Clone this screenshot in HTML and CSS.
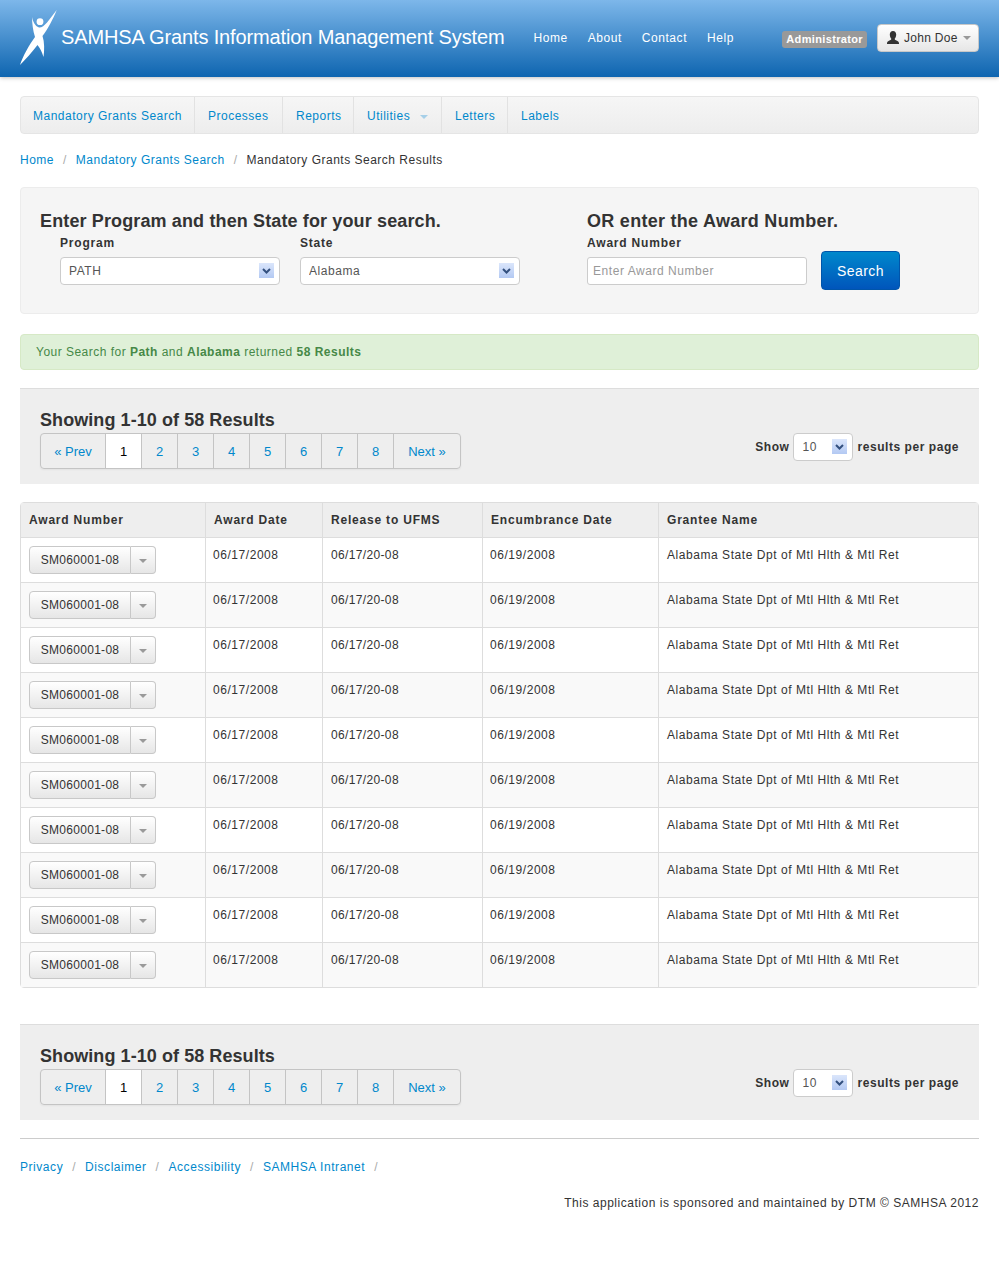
FILE: index.html
```html
<!DOCTYPE html>
<html lang="en">
<head>
  <meta charset="UTF-8">
  <title>SAMHSA Grants Information Management System</title>
  <link rel="stylesheet" href="styles.css">
</head>
<body>
  <header class="topbar">
    <a class="brand" href="#">
      <svg class="logo" width="37" height="56" viewBox="0 0 37 56">
        <circle cx="20" cy="11.7" r="3.4" fill="#fff"/>
        <path fill="#fff" d="M12 7C13 12 15 16 19 17.500C24 18 29 10 36.700 0C33 9 28 19 22.500 26C24.500 32 24.500 40 23.500 47C22 42 20 38 17.500 35C12 42 6 49 0 55C3 46 9 35 15 27C13 21 12 13 12 7Z"/>
      </svg>
      <span class="brand-name">SAMHSA Grants Information Management System</span>
    </a>
    <nav class="top-links">
      <a href="#">Home</a>
      <a href="#">About</a>
      <a href="#">Contact</a>
      <a href="#">Help</a>
    </nav>
    <div class="user-area">
      <span class="role-label">Administrator</span>
      <button class="user-btn" type="button">
        <svg width="12" height="14" viewBox="0 0 12 14"><path fill="#333" d="M6 0C8 0 9.200 1.500 9.200 3.600C9.200 5.500 8.500 7 7.700 7.800C7.700 8.800 8.500 9.200 10 9.800C11.200 10.300 12 10.800 12 12.500L12 13L0 13L0 12.500C0 10.800 .8 10.300 2 9.800C3.500 9.200 4.300 8.800 4.300 7.800C3.500 7 2.800 5.500 2.800 3.600C2.800 1.500 4 0 6 0Z"/></svg>
        John Doe <span class="caret"></span>
      </button>
    </div>
  </header>

  <div class="container">
    <ul class="main-nav">
      <li><a href="#">Mandatory Grants Search</a></li>
      <li><a href="#">Processes</a></li>
      <li><a href="#">Reports</a></li>
      <li><a href="#">Utilities <span class="caret caret-blue"></span></a></li>
      <li><a href="#">Letters</a></li>
      <li><a href="#">Labels</a></li>
    </ul>

    <ul class="breadcrumb">
      <li><a href="#">Home</a><span class="divider">/</span></li>
      <li><a href="#">Mandatory Grants Search</a><span class="divider">/</span></li>
      <li>Mandatory Grants Search Results</li>
    </ul>

    <form class="search-well">
      <div class="search-left">
        <h3>Enter Program and then State for your search.</h3>
        <div class="field-row">
          <div class="field">
            <label for="program">Program</label>
            <div class="select-wrap">
              <select id="program"><option>PATH</option></select>
              <svg class="select-arrow" width="15" height="15" viewBox="0 0 15 15"><use href="#arrow"/></svg>
            </div>
          </div>
          <div class="field">
            <label for="state">State</label>
            <div class="select-wrap">
              <select id="state"><option>Alabama</option></select>
              <svg class="select-arrow" width="15" height="15" viewBox="0 0 15 15"><use href="#arrow"/></svg>
            </div>
          </div>
        </div>
      </div>
      <div class="search-right">
        <h3>OR enter the Award Number.</h3>
        <label for="award">Award Number</label>
        <div class="award-row">
          <input type="text" id="award" placeholder="Enter Award Number">
          <button class="btn-search" type="button">Search</button>
        </div>
      </div>
    </form>

    <div class="alert">Your Search for <b>Path</b> and <b>Alabama</b> returned <b>58 Results</b></div>

    <section class="results-bar">
      <div>
        <h3>Showing 1-10 of 58 Results</h3>
        <ul class="pagination">
          <li class="wide-prev"><a href="#">« Prev</a></li>
          <li class="active"><a href="#">1</a></li>
          <li><a href="#">2</a></li>
          <li><a href="#">3</a></li>
          <li><a href="#">4</a></li>
          <li><a href="#">5</a></li>
          <li><a href="#">6</a></li>
          <li><a href="#">7</a></li>
          <li><a href="#">8</a></li>
          <li class="wide-next"><a href="#">Next »</a></li>
        </ul>
      </div>
      <div class="per-page">
        <b>Show</b>
        <div class="select-wrap select-small">
          <select><option>10</option></select>
          <svg class="select-arrow" width="15" height="15" viewBox="0 0 15 15"><use href="#arrow"/></svg>
        </div>
        <b>results per page</b>
      </div>
    </section>

    <table class="results">
      <thead>
        <tr>
          <th class="col-award">Award Number</th>
          <th class="col-date">Award Date</th>
          <th class="col-release">Release to UFMS</th>
          <th class="col-enc">Encumbrance Date</th>
          <th>Grantee Name</th>
        </tr>
      </thead>
      <tbody>
        <tr><td><div class="split"><button type="button">SM060001-08</button><button class="split-caret" type="button"><span class="caret"></span></button></div></td><td>06/17/2008</td><td>06/17/20-08</td><td>06/19/2008</td><td>Alabama State Dpt of Mtl Hlth &amp; Mtl Ret</td></tr>
        <tr><td><div class="split"><button type="button">SM060001-08</button><button class="split-caret" type="button"><span class="caret"></span></button></div></td><td>06/17/2008</td><td>06/17/20-08</td><td>06/19/2008</td><td>Alabama State Dpt of Mtl Hlth &amp; Mtl Ret</td></tr>
        <tr><td><div class="split"><button type="button">SM060001-08</button><button class="split-caret" type="button"><span class="caret"></span></button></div></td><td>06/17/2008</td><td>06/17/20-08</td><td>06/19/2008</td><td>Alabama State Dpt of Mtl Hlth &amp; Mtl Ret</td></tr>
        <tr><td><div class="split"><button type="button">SM060001-08</button><button class="split-caret" type="button"><span class="caret"></span></button></div></td><td>06/17/2008</td><td>06/17/20-08</td><td>06/19/2008</td><td>Alabama State Dpt of Mtl Hlth &amp; Mtl Ret</td></tr>
        <tr><td><div class="split"><button type="button">SM060001-08</button><button class="split-caret" type="button"><span class="caret"></span></button></div></td><td>06/17/2008</td><td>06/17/20-08</td><td>06/19/2008</td><td>Alabama State Dpt of Mtl Hlth &amp; Mtl Ret</td></tr>
        <tr><td><div class="split"><button type="button">SM060001-08</button><button class="split-caret" type="button"><span class="caret"></span></button></div></td><td>06/17/2008</td><td>06/17/20-08</td><td>06/19/2008</td><td>Alabama State Dpt of Mtl Hlth &amp; Mtl Ret</td></tr>
        <tr><td><div class="split"><button type="button">SM060001-08</button><button class="split-caret" type="button"><span class="caret"></span></button></div></td><td>06/17/2008</td><td>06/17/20-08</td><td>06/19/2008</td><td>Alabama State Dpt of Mtl Hlth &amp; Mtl Ret</td></tr>
        <tr><td><div class="split"><button type="button">SM060001-08</button><button class="split-caret" type="button"><span class="caret"></span></button></div></td><td>06/17/2008</td><td>06/17/20-08</td><td>06/19/2008</td><td>Alabama State Dpt of Mtl Hlth &amp; Mtl Ret</td></tr>
        <tr><td><div class="split"><button type="button">SM060001-08</button><button class="split-caret" type="button"><span class="caret"></span></button></div></td><td>06/17/2008</td><td>06/17/20-08</td><td>06/19/2008</td><td>Alabama State Dpt of Mtl Hlth &amp; Mtl Ret</td></tr>
        <tr><td><div class="split"><button type="button">SM060001-08</button><button class="split-caret" type="button"><span class="caret"></span></button></div></td><td>06/17/2008</td><td>06/17/20-08</td><td>06/19/2008</td><td>Alabama State Dpt of Mtl Hlth &amp; Mtl Ret</td></tr>
      </tbody>
    </table>

    <section class="results-bar results-bar-bottom">
      <div>
        <h3>Showing 1-10 of 58 Results</h3>
        <ul class="pagination">
          <li class="wide-prev"><a href="#">« Prev</a></li>
          <li class="active"><a href="#">1</a></li>
          <li><a href="#">2</a></li>
          <li><a href="#">3</a></li>
          <li><a href="#">4</a></li>
          <li><a href="#">5</a></li>
          <li><a href="#">6</a></li>
          <li><a href="#">7</a></li>
          <li><a href="#">8</a></li>
          <li class="wide-next"><a href="#">Next »</a></li>
        </ul>
      </div>
      <div class="per-page">
        <b>Show</b>
        <div class="select-wrap select-small">
          <select><option>10</option></select>
          <svg class="select-arrow" width="15" height="15" viewBox="0 0 15 15"><use href="#arrow"/></svg>
        </div>
        <b>results per page</b>
      </div>
    </section>

    <footer class="page-footer">
      <ul class="footer-links">
        <li><a href="#">Privacy</a><span class="divider">/</span></li>
        <li><a href="#">Disclaimer</a><span class="divider">/</span></li>
        <li><a href="#">Accessibility</a><span class="divider">/</span></li>
        <li><a href="#">SAMHSA Intranet</a><span class="divider">/</span></li>
      </ul>
      <p class="sponsor">This application is sponsored and maintained by DTM © SAMHSA 2012</p>
    </footer>
  </div>

  <!-- shared select arrow -->
  <svg class="defs" width="0" height="0">
    <defs>
      <linearGradient id="arrowBg" x1="0" y1="0" x2="0" y2="1">
        <stop offset="0" stop-color="#dbe6fb"/>
        <stop offset="1" stop-color="#b3c9f3"/>
      </linearGradient>
      <g id="arrow">
        <rect width="15" height="15" fill="url(#arrowBg)"/>
        <path d="M4 6L7.500 9.500L11 6" fill="none" stroke="#33507f" stroke-width="2"/>
      </g>
    </defs>
  </svg>
</body>
</html>
```

FILE: styles.css
```css
body {
  margin: 0;
  font-family: "Liberation Sans", Arial, sans-serif;
  font-size: 12px;
  line-height: 20px;
  letter-spacing: 0.55px;
  color: #333;
  background-color: #fff;
}

a {
  color: #0088cc;
  text-decoration: none;
}

ul {
  list-style: none;
  margin: 0;
  padding: 0;
}

h3 {
  margin: 0;
  font-size: 18px;
  line-height: 20px;
  letter-spacing: 0.13px;
  color: #333;
}

.defs {
  position: absolute;
}

/* top bar */
.topbar {
  display: flex;
  align-items: center;
  height: 77px;
  padding: 0 20px;
  box-sizing: border-box;
  background: linear-gradient(to bottom, #7db7ea, #0e65b0);
  box-shadow: 0 1px 4px rgba(0, 0, 0, 0.25);
}

.brand {
  display: flex;
  align-items: flex-start;
  color: #fff;
}

.logo {
  margin-top: -1px;
}

.brand-name {
  margin: 13px 0 0 4px;
  font-size: 20px;
  line-height: 26px;
  letter-spacing: -0.13px;
  white-space: nowrap;
}

.top-links {
  display: flex;
  gap: 20px;
  margin: 0 0 2px 29px;
}

.top-links a {
  color: #fff;
}

.user-area {
  display: flex;
  align-items: center;
  gap: 10px;
  margin-left: auto;
  margin-top: -2px;
}

.role-label {
  padding: 0 4px;
  border-radius: 3px;
  background-color: #999;
  color: #fff;
  font-size: 11px;
  line-height: 17px;
  font-weight: bold;
  letter-spacing: 0.35px;
  margin-top: 4px;
}

.user-btn {
  display: flex;
  align-items: center;
  gap: 5px;
  width: 102px;
  height: 28px;
  padding: 0 0 0 9px;
  border: 1px solid #c8c8c8;
  border-radius: 4px;
  background: linear-gradient(to bottom, #fff, #e6e6e6);
  font: inherit;
  letter-spacing: 0.3px;
  color: #333;
}

.caret {
  display: inline-block;
  width: 0;
  height: 0;
  border-top: 4px solid #999;
  border-left: 4px solid transparent;
  border-right: 4px solid transparent;
  vertical-align: middle;
}

.caret-blue {
  border-top-color: #a6cfe8;
  margin-left: 6px;
}

.container {
  padding: 0 20px;
}

/* main nav */
.main-nav {
  display: flex;
  height: 36px;
  margin-top: 19px;
  border: 1px solid #e5e5e5;
  border-radius: 4px;
  background: linear-gradient(to bottom, #f6f6f6, #ededed);
  letter-spacing: 0.5px;
}

.main-nav li {
  box-sizing: border-box;
  border-right: 1px solid #e2e2e2;
}

.main-nav li:nth-child(1) { width: 174px; }
.main-nav li:nth-child(2) { width: 88px; }
.main-nav li:nth-child(3) { width: 71px; }
.main-nav li:nth-child(4) { width: 88px; }
.main-nav li:nth-child(5) { width: 66px; }

.main-nav li:last-child {
  border-right: 0;
}

.main-nav a {
  display: block;
  padding: 0 13px 0 12px;
  line-height: 38px;
  white-space: nowrap;
}

.main-nav li + li a {
  padding-left: 13px;
}

.breadcrumb {
  display: flex;
  margin-top: 16px;
  letter-spacing: 0.5px;
}

.divider {
  padding: 0 9px;
  color: #aaa;
}

/* search box */
.search-well {
  display: flex;
  height: 102px;
  margin-top: 17px;
  padding-top: 23px;
  border: 1px solid #ececec;
  border-radius: 4px;
  background-color: #f5f5f5;
}

.search-left {
  width: 566px;
  padding-left: 19px;
  box-sizing: border-box;
}

.search-left h3,
.search-right h3 {
  margin-bottom: 3px;
}

.search-right h3 {
  letter-spacing: 0.28px;
}

.field-row {
  display: flex;
  gap: 20px;
  padding-left: 20px;
}

label {
  display: block;
  font-weight: bold;
  line-height: 18px;
  margin-bottom: 5px;
  letter-spacing: 0.8px;
}

.select-wrap {
  position: relative;
  width: 220px;
  height: 28px;
}

select {
  display: block;
  width: 100%;
  height: 100%;
  padding: 0 8px;
  border: 1px solid #ccc;
  border-radius: 4px;
  background-color: #fff;
  appearance: none;
  font: inherit;
  letter-spacing: inherit;
  color: #555;
}

.select-arrow {
  position: absolute;
  top: 6px;
  right: 6px;
}

.search-right {
  flex: 1;
}

.award-row {
  display: flex;
  align-items: flex-end;
  gap: 14px;
  margin-top: -6px;
}

.award-row input {
  width: 220px;
  height: 28px;
  padding: 0 5px;
  box-sizing: border-box;
  border: 1px solid #ccc;
  border-radius: 3px;
  font: inherit;
  letter-spacing: inherit;
  margin-bottom: 5px;
}

.award-row input::placeholder {
  color: #999;
}

.btn-search {
  width: 79px;
  height: 39px;
  border: 1px solid #0055aa;
  border-radius: 4px;
  background: linear-gradient(to bottom, #0088cc, #0055bb);
  color: #fff;
  font: inherit;
  font-size: 14px;
  letter-spacing: 0.4px;
}

.alert {
  height: 34px;
  margin-top: 20px;
  padding-left: 15px;
  border: 1px solid #d6e9c6;
  border-radius: 4px;
  background-color: #dff0d8;
  color: #468847;
  line-height: 35px;
  letter-spacing: 0.48px;
}

/* results bar + pager */
.results-bar {
  display: flex;
  justify-content: space-between;
  height: 95px;
  margin-top: 18px;
  padding: 0 20px;
  border-top: 1px solid #ddd;
  background-color: #eee;
}

.results-bar h3 {
  margin-top: 21px;
  letter-spacing: 0.07px;
}

.pagination {
  display: flex;
  height: 34px;
  margin-top: 3px;
  border: 1px solid #c4c4c4;
  border-radius: 4px;
  box-shadow: 0 1px 2px rgba(0, 0, 0, 0.05);
}

.pagination li {
  width: 35px;
  border-right: 1px solid #c4c4c4;
  text-align: center;
}

.pagination li:last-child {
  border-right: 0;
}

.pagination a {
  display: block;
  line-height: 35px;
  font-size: 13px;
  letter-spacing: 0;
}

.pagination .wide-prev {
  width: 64px;
}

.pagination .wide-next {
  width: 66px;
}

.pagination .active {
  background-color: #fff;
}

.pagination .active a {
  color: #000;
}

.per-page {
  display: flex;
  align-items: center;
  gap: 4px;
  height: 28px;
  margin-top: 44px;
}

.per-page .select-small {
  width: 60px;
}

/* table */
.results {
  width: 100%;
  margin-top: 18px;
  border-collapse: separate;
  border-spacing: 0;
  border: 1px solid #ddd;
  border-radius: 4px;
  table-layout: fixed;
}

.results th,
.results td {
  padding: 7px 8px;
  text-align: left;
  vertical-align: top;
  border-left: 1px solid #ddd;
  border-top: 1px solid #ddd;
}

.results th:first-child,
.results td:first-child {
  border-left: 0;
}

.results th {
  background-color: #eee;
  border-top: 0;
  letter-spacing: 0.8px;
}

.results td {
  padding-bottom: 8px;
}

.results td:nth-child(2),
.results td:nth-child(4) {
  padding-left: 7px;
}

.results td:nth-child(3) {
  letter-spacing: 0.35px;
}

.results tbody tr:nth-child(even) td {
  background-color: #f9f9f9;
}

.col-award {
  width: 168px;
}

.col-date {
  width: 100px;
}

.col-release {
  width: 143px;
}

.col-enc {
  width: 159px;
}

.split {
  display: flex;
  width: 127px;
  height: 28px;
  margin-top: 1px;
}

.split button {
  flex: 1;
  padding: 0;
  border: 1px solid #c8c8c8;
  border-radius: 4px 0 0 4px;
  background: linear-gradient(to bottom, #fff, #e6e6e6);
  font: inherit;
  letter-spacing: 0.3px;
  color: #333;
}

.split .split-caret {
  flex: 0 0 25px;
  border-left: 0;
  border-radius: 0 4px 4px 0;
}

.results-bar-bottom {
  margin-top: 36px;
}

/* footer */
.page-footer {
  margin-top: 18px;
  border-top: 1px solid #ccc;
}

.footer-links {
  display: flex;
  margin-top: 18px;
}

.sponsor {
  margin: 16px 0 0;
  text-align: right;
  letter-spacing: 0.52px;
}
```
